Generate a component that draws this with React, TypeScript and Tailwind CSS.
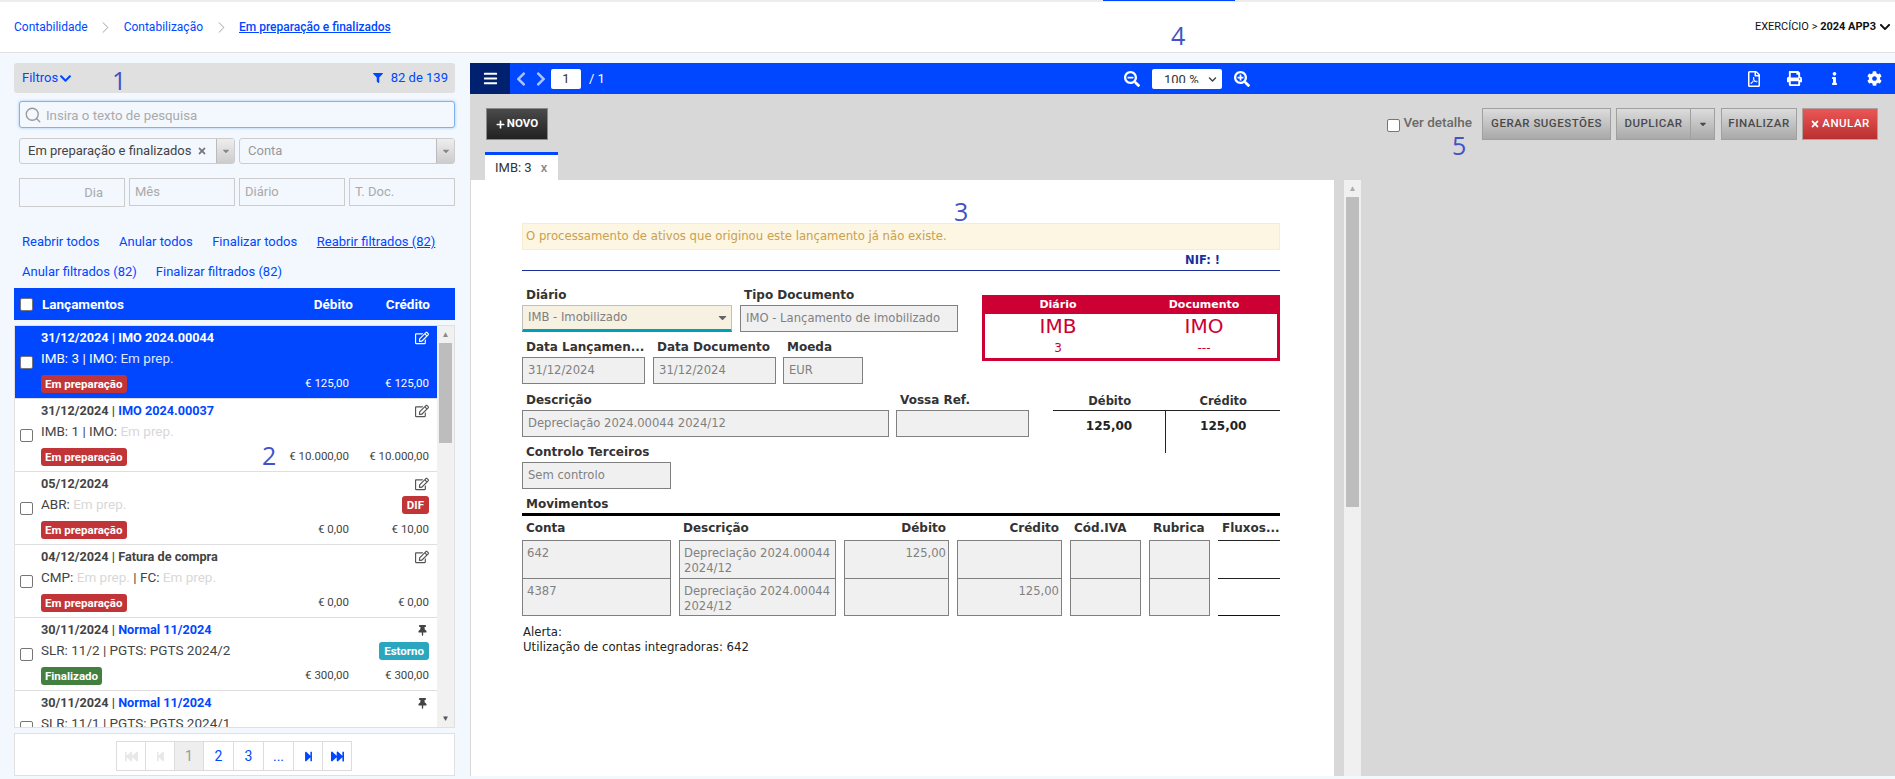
import React from 'react';
import { ChevronRight, Search } from 'lucide-react';
import {
  FaBars, FaChevronDown, FaCaretDown, FaCog, FaFastBackward, FaFastForward, FaFilter, FaInfo, FaPlus, FaPrint,
  FaRegEdit, FaRegFilePdf, FaSearchMinus, FaSearchPlus, FaStepBackward, FaStepForward, FaThumbtack, FaTimes,
  FaChevronLeft, FaChevronRight,
} from 'react-icons/fa';

type Part = { text: string; faded?: boolean };

type Entry = {
  date: string;
  doc?: string;
  plainDoc?: boolean;
  parts: Part[];
  status?: string;
  debit?: string;
  credit?: string;
  selected?: boolean;
  pin?: boolean;
  tag?: string;
};

const ENTRIES: Entry[] = [
  { date: '31/12/2024', doc: 'IMO 2024.00044', parts: [{ text: 'IMB: 3 | IMO: ' }, { text: 'Em prep.', faded: true }], status: 'Em preparação', debit: '€ 125,00', credit: '€ 125,00', selected: true },
  { date: '31/12/2024', doc: 'IMO 2024.00037', parts: [{ text: 'IMB: 1 | IMO: ' }, { text: 'Em prep.', faded: true }], status: 'Em preparação', debit: '€ 10.000,00', credit: '€ 10.000,00' },
  { date: '05/12/2024', parts: [{ text: 'ABR: ' }, { text: 'Em prep.', faded: true }], status: 'Em preparação', debit: '€ 0,00', credit: '€ 10,00', tag: 'DIF' },
  { date: '04/12/2024', doc: 'Fatura de compra', plainDoc: true, parts: [{ text: 'CMP: ' }, { text: 'Em prep.', faded: true }, { text: ' | FC: ' }, { text: 'Em prep.', faded: true }], status: 'Em preparação', debit: '€ 0,00', credit: '€ 0,00' },
  { date: '30/11/2024', doc: 'Normal 11/2024', parts: [{ text: 'SLR: 11/2 | PGTS: PGTS 2024/2' }], status: 'Finalizado', debit: '€ 300,00', credit: '€ 300,00', pin: true, tag: 'Estorno' },
  // last one is cut by the list, only the first two lines show
  { date: '30/11/2024', doc: 'Normal 11/2024', parts: [{ text: 'SLR: 11/1 | PGTS: PGTS 2024/1' }], pin: true },
];

const Check = ({ className = '' }: { className?: string }) => (
  <span className={`block w-[13px] h-[13px] shrink-0 rounded-[2px] border border-[#767676] bg-white ${className}`} />
);

const Note = ({ n, className }: { n: string; className: string }) => (
  <span className={`absolute text-[#4352c8] text-[25px] leading-none font-medium font-['Open_Sans',sans-serif] ${className}`}>{n}</span>
);

const EntryRow = ({ e }: { e: Entry }) => (
  <div className={`flex h-[73px] shrink-0 border-b border-[#dedede] ${e.selected ? 'bg-[#0047ff] text-white' : 'bg-white text-[#444]'}`}>
    <div className="w-[26px] shrink-0 pt-[30px] pl-[5px]">
      <Check />
    </div>
    <div className="flex-1 pr-[8px] min-w-0">
      <div className="flex justify-between items-center h-[22px] mt-[1px]">
        <span className="text-[12.7px] font-bold">
          {e.date}
          {e.doc && (
            <>
              {' | '}
              <span className={e.selected || e.plainDoc ? '' : 'text-[#0047ff]'}>{e.doc}</span>
            </>
          )}
        </span>
        {e.pin ? <FaThumbtack className="text-[#444] text-[11px] mr-[1px]" /> : <FaRegEdit className={`text-[14px] ${e.selected ? 'text-white' : 'text-[#555]'}`} />}
      </div>
      <div className="flex justify-between items-center h-[19px]">
        <span className="text-[13.5px]">
          {e.parts.map((p, i) => (
            <span key={i} className={p.faded ? (e.selected ? 'text-[#dfe6ff]' : 'text-[#d8d8d8]') : ''}>{p.text}</span>
          ))}
        </span>
        {e.tag && (
          <span className={`text-white text-[11.5px] font-bold rounded-[3px] px-[5px] h-[18px] leading-[18px] ${e.tag === 'DIF' ? 'bg-[#c13538]' : 'bg-[#2aa7bf]'}`}>{e.tag}</span>
        )}
      </div>
      {e.status && (
        <div className="flex items-center h-[18px] mt-[7px]">
          <span className={`text-white text-[11.5px] font-bold rounded-[3px] px-[4px] h-[18px] leading-[18px] ${e.status === 'Finalizado' ? 'bg-[#43803f]' : 'bg-[#c13538]'}`}>{e.status}</span>
          <span className="ml-auto text-[11.5px]">{e.debit}</span>
          <span className="w-[80px] text-right text-[11.5px]">{e.credit}</span>
        </div>
      )}
    </div>
  </div>
);

const PageBtn = ({ children, w = 'w-[30px]', className = '' }: { children: React.ReactNode; w?: string; className?: string }) => (
  <span className={`${w} h-[30px] -ml-[1px] flex items-center justify-center border border-[#ddd] text-[14px] ${className}`}>{children}</span>
);

const GrayBtn = ({ children, className = '' }: { children: React.ReactNode; className?: string }) => (
  <span className={`h-[32px] flex items-center justify-center border border-[#a0a0a0] bg-gradient-to-b from-[#dcdcdc] to-[#a9a9a9] text-[#4a4a4a] text-[11.5px] font-medium tracking-[0.5px] ${className}`}>{children}</span>
);

const Crumb = () => (
  <span className="w-[36px] flex justify-center text-[#888]">
    <ChevronRight size={19} strokeWidth={1} />
  </span>
);

const Field = ({ label, value, w, className = '' }: { label: string; value?: string; w: string; className?: string }) => (
  <div className={`${w} shrink-0 ${className}`}>
    <div className="h-[20px] pl-[4px] text-[12px] font-bold text-[#333] leading-[21px] whitespace-nowrap">{label}</div>
    <div className="h-[27px] border border-[#808080] bg-[#f0f0f0] text-[#808080] text-[11.6px] px-[5px] leading-[25px] whitespace-nowrap overflow-hidden">{value}</div>
  </div>
);

const Cell = ({ value, right, className = '' }: { value?: string; right?: boolean; className?: string }) => (
  <div className={`border border-[#808080] bg-[#f0f0f0] text-[#808080] text-[11.6px] leading-[15px] ${right ? 'text-right pr-[2px]' : 'pl-[4px] pr-0'} pt-[5px] ${className}`}>{value}</div>
);

const HEAD_CELL = 'text-[12px] font-bold text-[#333] h-[24px] leading-[24px] whitespace-nowrap';

export default function App() {
  return (
    <div className="relative h-screen w-screen overflow-hidden flex flex-col bg-white font-['Roboto',sans-serif]">
      {/* top strip */}
      <div className="h-[2px] shrink-0 bg-[#ececec] flex">
        <span className="ml-[1103px] w-[132px] h-[1px] bg-[#0047ff]" />
      </div>

      {/* breadcrumb */}
      <div className="h-[51px] shrink-0 flex items-center border-b border-[#e2e2e2] pl-[14px] pr-[4px] text-[12px] text-[#0047ff]">
        <span>Contabilidade</span>
        <Crumb />
        <span>Contabilização</span>
        <Crumb />
        <span className="font-medium underline">Em preparação e finalizados</span>
        <span className="ml-auto text-[#111] text-[11px] flex items-center">
          EXERCÍCIO &gt;&nbsp;<b>2024 APP3</b>
          <FaChevronDown className="ml-[3px] text-[12px]" />
        </span>
      </div>

      <div className="flex-1 min-h-0 flex bg-[#f3f7fe]">
        {/* left panel */}
        <aside className="w-[470px] shrink-0 flex flex-col pl-[14px] pr-[15px] pt-[10px] pb-[3px]">
          <div className="h-[30px] shrink-0 rounded-[3px] bg-[#e0e0e0] flex items-center justify-between pl-[8px] pr-[7px] text-[#0047ff] text-[13px]">
            <span className="flex items-center">
              Filtros
              <FaChevronDown className="ml-[1px] text-[13px]" />
            </span>
            <span className="flex items-center">
              <FaFilter className="text-[10px] mr-[8px]" />
              82 de 139
            </span>
          </div>

          <div className="ml-[5px] mt-[8px] h-[27px] shrink-0 rounded-[3px] border border-[#7db4ef] bg-[#f3f7fe] shadow-[0_0_3px_#9cc5f3] flex items-center pl-[4px] text-[#aaa] text-[13.3px]">
            <Search size={18} strokeWidth={1.75} className="text-[#999] mr-[4px]" />
            <span className="translate-y-[1px]">Insira o texto de pesquisa</span>
          </div>

          <div className="ml-[5px] mt-[10px] flex gap-[4px] shrink-0">
            <div className="w-[216px] h-[26px] rounded-[3px] border border-[#ccc] flex items-center text-[13px] text-[#444]">
              <span className="pl-[8px]">Em preparação e finalizados</span>
              <FaTimes className="ml-auto mr-[9px] text-[#777] text-[10px]" />
              <span className="w-[18px] h-full border-l border-[#bbb] bg-gradient-to-b from-[#eee] to-[#ccc] flex items-center justify-center"><FaCaretDown className="text-[#888] text-[10px]" /></span>
            </div>
            <div className="w-[216px] h-[26px] rounded-[3px] border border-[#ccc] flex items-center text-[13px] text-[#999]">
              <span className="pl-[8px]">Conta</span>
              <span className="ml-auto w-[18px] h-full border-l border-[#bbb] bg-gradient-to-b from-[#eee] to-[#ccc] flex items-center justify-center"><FaCaretDown className="text-[#888] text-[10px]" /></span>
            </div>
          </div>

          <div className="ml-[5px] mt-[14px] grid grid-cols-4 gap-[4px] shrink-0 text-[13px] text-[#aaa]">
            <span className="h-[29px] border border-[#ccc] flex items-center justify-end pr-[21px]">Dia</span>
            <span className="h-[28px] border border-[#ccc] flex items-center pl-[5px]">Mês</span>
            <span className="h-[28px] border border-[#ccc] flex items-center pl-[5px]">Diário</span>
            <span className="h-[28px] border border-[#ccc] flex items-center pl-[5px]">T. Doc.</span>
          </div>

          <div className="mt-[20px] pl-[8px] shrink-0 text-[13px] text-[#0047ff]">
            <div className="h-[30px] flex items-center gap-[19.5px]">
              <span>Reabrir todos</span>
              <span>Anular todos</span>
              <span>Finalizar todos</span>
              <span className="underline">Reabrir filtrados (82)</span>
            </div>
            <div className="h-[30px] flex items-center gap-[19px]">
              <span>Anular filtrados (82)</span>
              <span>Finalizar filtrados (82)</span>
            </div>
          </div>

          <div className="mt-[1px] h-[32px] shrink-0 bg-[#0047ff] text-white text-[13.5px] font-bold flex items-center pl-[6px]">
            <Check />
            <span className="ml-[9px]">Lançamentos</span>
            <span className="ml-auto">Débito</span>
            <span className="w-[77px] text-right mr-[25px]">Crédito</span>
          </div>

          <div className="mt-[5px] flex-1 min-h-0 flex border border-[#e0e0e0] bg-white">
            <div className="flex-1 min-w-0 flex flex-col overflow-hidden">
              {ENTRIES.map((e, i) => <EntryRow key={i} e={e} />)}
            </div>
            <div className="w-[17px] shrink-0 bg-[#f1f1f1] flex flex-col items-center">
              <span className="h-[17px] flex items-center text-[#888] text-[8px]">▲</span>
              <span className="w-[13px] h-[100px] bg-[#bdbdbd]" />
              <span className="mt-auto h-[17px] flex items-center text-[#555] text-[8px]">▼</span>
            </div>
          </div>

          <div className="mt-[5px] h-[43px] shrink-0 border border-[#e0e0e0] bg-white flex items-start justify-center pt-[7px] text-[#0047ff]">
            <PageBtn className="text-[#e8e8e8]"><FaFastBackward className="text-[13px]" /></PageBtn>
            <PageBtn className="text-[#e8e8e8]"><FaStepBackward className="text-[11px]" /></PageBtn>
            <PageBtn className="bg-[#eee] text-[#999]">1</PageBtn>
            <PageBtn w="w-[31px]">2</PageBtn>
            <PageBtn w="w-[31px]">3</PageBtn>
            <PageBtn w="w-[31px]">...</PageBtn>
            <PageBtn><FaStepForward className="text-[11px]" /></PageBtn>
            <PageBtn><FaFastForward className="text-[13px]" /></PageBtn>
          </div>
        </aside>

        {/* right area */}
        <main className="flex-1 min-w-0 flex flex-col pt-[10px] pb-[3px]">
          <div className="h-[31px] shrink-0 bg-[#0047ff] flex items-center text-white">
            <div className="w-[654px] shrink-0 h-full flex items-center">
              <span className="w-[40px] h-full bg-[#002070] flex items-center justify-center"><FaBars className="text-[15px]" /></span>
              <FaChevronLeft className="ml-[3px] text-[16px] text-[#a9c4ff]" />
              <FaChevronRight className="ml-[4px] text-[16px] text-[#a9c4ff]" />
              <span className="ml-[2px] w-[30px] h-[20px] rounded-[2px] bg-white text-[#333] text-[13px] flex items-center justify-center">1</span>
              <span className="ml-[8px] text-[13px] whitespace-nowrap">/ 1</span>
            </div>
            <FaSearchMinus className="text-[16px]" />
            <span className="ml-[12px] w-[70px] h-[20px] rounded-[2px] bg-white text-[#333] text-[13px] flex items-start pl-[12px]">
              <span className="h-[14px] overflow-hidden leading-[22px]">100 %</span>
              <FaChevronDown className="ml-auto mr-[5px] mt-[6px] text-[9px] text-[#444]" />
            </span>
            <FaSearchPlus className="ml-[12px] text-[16px]" />
            <div className="ml-auto mr-[1px] flex items-center">
              <span className="w-[40px] flex justify-center"><FaRegFilePdf className="text-[16px]" /></span>
              <span className="w-[40px] flex justify-center"><FaPrint className="text-[15px]" /></span>
              <span className="w-[40px] flex justify-center"><FaInfo className="text-[13px]" /></span>
              <span className="w-[40px] flex justify-center"><FaCog className="text-[15px]" /></span>
            </div>
          </div>

          <div className="h-[86px] shrink-0 bg-[#d8d8d8] flex flex-col">
            <div className="flex items-start pl-[16px] pr-[17px] pt-[14px]">
              <span className="w-[62px] h-[32px] flex items-center justify-center border border-[#8a8a8a] bg-gradient-to-b from-[#4a4a4a] to-[#222] text-white text-[11.5px] font-bold">
                <FaPlus className="text-[9px] mr-[2px]" />
                NOVO
              </span>
              <Check className="ml-auto mt-[11px]" />
              <span className="ml-[3px] mt-[4px] mr-[10px] text-[13.5px] font-medium text-[#6a6a6a]">Ver detalhe</span>
              <GrayBtn className="w-[129px]">GERAR SUGESTÕES</GrayBtn>
              <GrayBtn className="w-[75px] ml-[5px]">DUPLICAR</GrayBtn>
              <GrayBtn className="w-[25px] -ml-[1px]"><FaCaretDown className="text-[10px]" /></GrayBtn>
              <GrayBtn className="w-[76px] ml-[6px]">FINALIZAR</GrayBtn>
              <span className="w-[76px] h-[32px] ml-[5px] flex items-center justify-center border border-[#b0a0a0] bg-gradient-to-b from-[#ec5656] to-[#b93030] text-white text-[11.5px] font-medium tracking-[0.5px]">
                <FaTimes className="text-[10px] mr-[2px]" />
                ANULAR
              </span>
            </div>
            <div className="mt-auto ml-[15px] w-[73px] h-[28px] bg-white border-t-[3px] border-[#0047ff] flex items-center pl-[10px] text-[13px] text-[#333]">
              IMB: 3
              <span className="ml-[9px] text-[#888] font-medium">x</span>
            </div>
          </div>

          <div className="flex-1 min-h-0 flex bg-[#d8d8d8]">
            <div className="w-[863px] shrink-0 ml-[1px] bg-white pl-[51px] pt-[43px] font-['DejaVu_Sans',sans-serif] overflow-hidden">
              <div className="w-[758px]">
                <div className="h-[27px] border border-[#faebcc] bg-[#fcf6e3] text-[#c9a050] text-[11.7px] flex items-center pl-[3px]">
                  O processamento de ativos que originou este lançamento já não existe.
                </div>
                <div className="h-[21px] border-b border-[#1a2f9c] flex items-end justify-end pr-[60px] pb-[1px] text-[#1a2f9c] text-[11.5px] font-bold">NIF: !</div>

                <div className="mt-[14px] flex">
                  <div>
                    <div className="flex gap-[8px]">
                      <div className="w-[210px] shrink-0">
                        <div className="h-[20px] pl-[4px] text-[12px] font-bold text-[#333] leading-[21px]">Diário</div>
                        <div className="h-[27px] border border-[#c0c0c0] border-b-[3px] border-b-[#00a0b8] bg-[#f7f1e1] text-[#808080] text-[11.6px] px-[5px] flex items-center justify-between">
                          IMB - Imobilizado
                          <FaCaretDown className="text-[#666] text-[13px] -mr-[3px]" />
                        </div>
                      </div>
                      <Field label="Tipo Documento" value="IMO - Lançamento de imobilizado" w="w-[218px]" />
                    </div>
                    <div className="mt-[5px] flex gap-[8px]">
                      <Field label="Data Lançamen..." value="31/12/2024" w="w-[123px]" />
                      <Field label="Data Documento" value="31/12/2024" w="w-[123px]" />
                      <Field label="Moeda" value="EUR" w="w-[80px]" className="-ml-[1px]" />
                    </div>
                  </div>
                  <div className="ml-[24px] mt-[10px] w-[299px] h-[66px] border-[3px] border-[#cc0033] text-[#cc0033] text-center">
                    <div className="h-[16px] bg-[#cc0033] text-white text-[11px] font-bold grid grid-cols-2 leading-[13px]">
                      <span>Diário</span>
                      <span>Documento</span>
                    </div>
                    <div className="grid grid-cols-2 text-[20px] leading-[25px]">
                      <span>IMB</span>
                      <span>IMO</span>
                    </div>
                    <div className="grid grid-cols-2 text-[12px] leading-[18px]">
                      <span>3</span>
                      <span>---</span>
                    </div>
                  </div>
                </div>

                <div className="mt-[6px] flex">
                  <Field label="Descrição" value="Depreciação 2024.00044 2024/12" w="w-[367px]" />
                  <Field label="Vossa Ref." w="w-[133px]" className="ml-[7px]" />
                  <div className="ml-[24px] w-[227px] font-bold text-[#333]">
                    <div className="grid grid-cols-2 text-center h-[21px] leading-[23px] border-b border-[#222] text-[11.5px]">
                      <span>Débito</span>
                      <span>Crédito</span>
                    </div>
                    <div className="grid grid-cols-2 text-center text-[12px] text-[#222]">
                      <span className="pt-[6px] h-[42px] border-r border-[#222] w-[113px]">125,00</span>
                      <span className="pt-[6px]">125,00</span>
                    </div>
                  </div>
                </div>

                <Field label="Controlo Terceiros" value="Sem controlo" w="w-[149px]" className="-mt-[11px]" />

                <div className="mt-[5px] h-[19px] pl-[4px] text-[12px] font-bold text-[#333] leading-[20px]">Movimentos</div>
                <div className="h-[3px] bg-black" />

                <div className="grid grid-cols-[149px_157px_105px_105px_71px_61px_62px] gap-x-[8px]">
                  <div className={`${HEAD_CELL} pl-[4px]`}>Conta</div>
                  <div className={`${HEAD_CELL} pl-[4px]`}>Descrição</div>
                  <div className={`${HEAD_CELL} text-right pr-[3px]`}>Débito</div>
                  <div className={`${HEAD_CELL} text-right pr-[3px]`}>Crédito</div>
                  <div className={`${HEAD_CELL} pl-[4px]`}>Cód.IVA</div>
                  <div className={`${HEAD_CELL} pl-[4px]`}>Rubrica</div>
                  <div className={`${HEAD_CELL} pl-[4px]`}>Fluxos...</div>

                  <Cell value="642" className="h-[39px]" />
                  <Cell value="Depreciação 2024.00044 2024/12" className="h-[39px]" />
                  <Cell value="125,00" right className="h-[39px]" />
                  <Cell className="h-[39px]" />
                  <Cell className="h-[39px]" />
                  <Cell className="h-[39px]" />
                  <div className="h-[39px] border-t border-[#222] border-b" />

                  <Cell value="4387" className="h-[38px] -mt-[1px]" />
                  <Cell value="Depreciação 2024.00044 2024/12" className="h-[38px] -mt-[1px] pt-[4px]" />
                  <Cell className="h-[38px] -mt-[1px]" />
                  <Cell value="125,00" right className="h-[38px] -mt-[1px]" />
                  <Cell className="h-[38px] -mt-[1px]" />
                  <Cell className="h-[38px] -mt-[1px]" />
                  <div className="h-[38px] -mt-[1px] border-b border-[#111]" />
                </div>

                <div className="mt-[9px] pl-[1px] text-[11.7px] leading-[15px] text-[#222]">
                  Alerta:
                  <br />
                  Utilização de contas integradoras: 642
                </div>
              </div>
            </div>

            <div className="ml-[10px] w-[17px] shrink-0 bg-[#f0f0f0] flex flex-col items-center">
              <span className="h-[17px] flex items-center text-[#aaa] text-[8px]">▲</span>
              <span className="w-[13px] h-[310px] bg-[#bdbdbd]" />
            </div>
          </div>
        </main>
      </div>

      <Note n="1" className="left-[112px] top-[68px]" />
      <Note n="2" className="left-[262px] top-[443px]" />
      <Note n="3" className="left-[954px] top-[199px]" />
      <Note n="4" className="left-[1171px] top-[23px]" />
      <Note n="5" className="left-[1452px] top-[133px]" />
    </div>
  );
}
